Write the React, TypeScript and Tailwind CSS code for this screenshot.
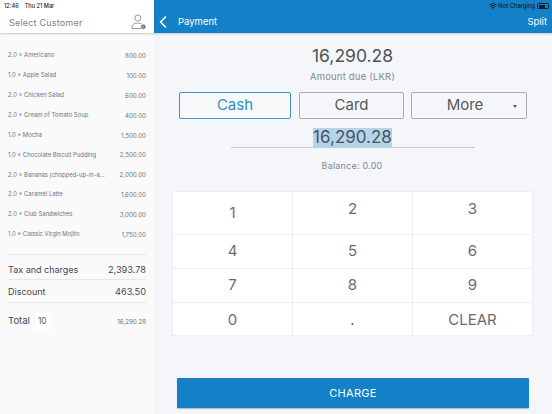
import { ChevronLeft, Wifi } from 'lucide-react';

const items = [
  ['2.0 × Americano', '800.00'],
  ['1.0 × Apple Salad', '100.00'],
  ['2.0 × Chicken Salad', '600.00'],
  ['2.0 × Cream of Tomato Soup', '400.00'],
  ['1.0 × Mocha', '1,500.00'],
  ['1.0 × Chocolate Biscuit Pudding', '2,500.00'],
  ['2.0 × Bananas (chopped-up-in-a...', '2,000.00'],
  ['2.0 × Caramel Latte', '1,600.00'],
  ['2.0 × Club Sandwiches', '3,000.00'],
  ['1.0 × Classic Virgin Mojito', '1,750.00'],
];

const keys = [
  ['1', '2', '3'],
  ['4', '5', '6'],
  ['7', '8', '9'],
  ['0', '.', 'CLEAR'],
];

const rowHeights = ['h-[42px]', 'h-[34px]', 'h-[34px]', 'h-[33px]'];

const CustomerIcon = () => (
  <svg width="16" height="16" viewBox="0 0 16 16" fill="none" stroke="#6b6f76" strokeWidth="0.7">
    <circle cx="6.8" cy="4" r="3" />
    <path d="M1 14.5v-2c0-2 2-3.4 5.8-3.4 1.6 0 2.9.3 3.9.8M1 14.5h9" />
    <circle cx="12.3" cy="12.8" r="2" fill="#6b6f76" />
    <path d="M11.5 12l1.6 1.6M13.1 12l-1.6 1.6" stroke="#fff" strokeWidth="0.5" />
  </svg>
);

export default function App() {
  return (
    <div className="w-[552px] h-[414px] overflow-hidden flex bg-[#f4f6fa] text-[#55585e] font-['Inter',sans-serif]">
      <div className="w-[154px] flex flex-col bg-[#fafafa]">
        <div className="h-[33px] bg-white shadow-[0_1px_2px_rgba(0,0,0,0.2)] px-[4px] flex flex-col z-10">
          <div className="h-[11px] pt-[1px] flex items-center text-[5.6px] font-medium text-[#222] gap-[6px] whitespace-nowrap">
            <span>12:46</span>
            <span>Thu 21 Mar</span>
          </div>
          <div className="flex-1 flex items-center justify-between pl-[5px] pr-[3px]">
            <span className="text-[9px] tracking-[0.2px] text-[#7b7f85] pt-[1px]">Select Customer</span>
            <CustomerIcon />
          </div>
        </div>
        <div className="px-[8px] pt-[13px] flex-1 flex flex-col">
          {items.map(([name, price]) => (
            <div key={name} className="h-[19.85px] flex items-center justify-between text-[5.9px] text-[#6f7277] whitespace-nowrap">
              <span>{name}</span>
              <span className="text-[6.2px]">{price}</span>
            </div>
          ))}
          <div className="mt-[10px] border-t border-[#e6e7e9] h-[25px] pt-[4px] flex items-center justify-between text-[9px] text-[#46494e]">
            <span>Tax and charges</span>
            <span className="text-[9.2px]">2,393.78</span>
          </div>
          <div className="border-y border-[#e6e7e9] h-[24px] pt-[1px] flex items-center justify-between text-[9px] text-[#46494e]">
            <span>Discount</span>
            <span className="text-[9.2px]">463.50</span>
          </div>
          <div className="h-[36px] flex items-center justify-between text-[#46494e]">
            <div className="flex items-center gap-[5px] text-[9.5px]">
              <span>Total</span>
              <span className="px-[3px] py-[3px] bg-[#fefefe] text-[8.5px] leading-[12px] text-[#5c5f64]">10</span>
            </div>
            <span className="text-[6.2px] text-[#6f7277]">16,290.28</span>
          </div>
        </div>
      </div>

      <div className="flex-1 flex flex-col items-center">
        <div className="w-full h-[33px] bg-[#1380c8] shadow-[0_1px_2px_rgba(0,0,0,0.2)] text-white flex flex-col">
          <div className="h-[11px] pt-[1px] flex items-center justify-end gap-[1px] pr-[3px] text-[5.8px] font-medium text-[#10202c] whitespace-nowrap">
            <Wifi size={8} strokeWidth={3} />
            <span>Not Charging</span>
            <div className="w-[12px] h-[6px] ml-[1px] border border-[#10202c] rounded-[1.5px] p-[0.5px]">
              <div className="w-[6px] h-full bg-[#10202c]" />
            </div>
          </div>
          <div className="flex-1 flex items-center justify-between pr-[5px] text-[9.5px]">
            <div className="flex items-center gap-[5px] -ml-[1px]">
              <ChevronLeft size={20} strokeWidth={2} />
              <span>Payment</span>
            </div>
            <span>Split</span>
          </div>
        </div>

        <div className="mt-[12px] text-[17.5px] leading-[22px] text-[#4f5258] ml-[-1px]">16,290.28</div>
        <div className="mt-[3px] text-[9.5px] leading-[14px] text-[#85888c] tracking-[0.2px] ml-[-1px]">Amount due (LKR)</div>

        <div className="mt-[8px] flex">
          <button className="w-[112px] h-[27px] mr-[8px] rounded-[2px] border border-[#3d96d2] bg-white/30 text-[#2f8dce] text-[15px]">Cash</button>
          <button className="w-[105px] h-[27px] mr-[7px] rounded-[2px] border border-[#a9abb0] text-[15px]">Card</button>
          <button className="relative w-[116px] h-[27px] pr-[8px] rounded-[2px] border border-[#a9abb0] text-[15px]">
            More
            <span className="absolute right-[9px] top-[12px] border-x-[2.5px] border-x-transparent border-t-[3px] border-t-[#55585e]" />
          </button>
        </div>

        <div className="mt-[9px] w-[244px] h-[20px] border-b border-[#c9cbd0] flex justify-center">
          <span className="h-[19px] bg-[#b3d5ec] text-[17px] leading-[19px] text-[#4f5258] ml-[-1px]">16,290.28</span>
        </div>
        <div className="mt-[12px] text-[9px] leading-[12px] text-[#85888c] tracking-[0.2px] ml-[-2px]">Balance: 0.00</div>

        <div className="mt-[19px] w-[361px] ml-[-1px] bg-white border border-[#eeeeee] flex flex-col text-[#6b6b6b]">
          {keys.map((row, i) => (
            <div key={i} className={`flex ${rowHeights[i]} ${i > 0 ? 'border-t border-[#eeeeee]' : ''}`}>
              {row.map((k, j) => (
                <div
                  key={k}
                  className={`flex-1 flex items-center justify-center text-[15px] ${j > 0 ? 'border-l border-[#eeeeee]' : ''} ${i === 0 && j === 0 ? 'pt-[1px]' : ''} ${i === 0 && j > 0 ? 'pb-[7px]' : ''} ${i === 3 ? 'pt-[2px]' : ''}`}
                >
                  {k}
                </div>
              ))}
            </div>
          ))}
        </div>

        <button className="mt-[42px] w-[352px] h-[30px] pt-[1px] bg-[#1380c8] rounded-[1px] text-white text-[11px] tracking-[0.3px] shadow-[0_1px_1px_rgba(0,0,0,0.25)]">
          CHARGE
        </button>
      </div>
    </div>
  );
}
